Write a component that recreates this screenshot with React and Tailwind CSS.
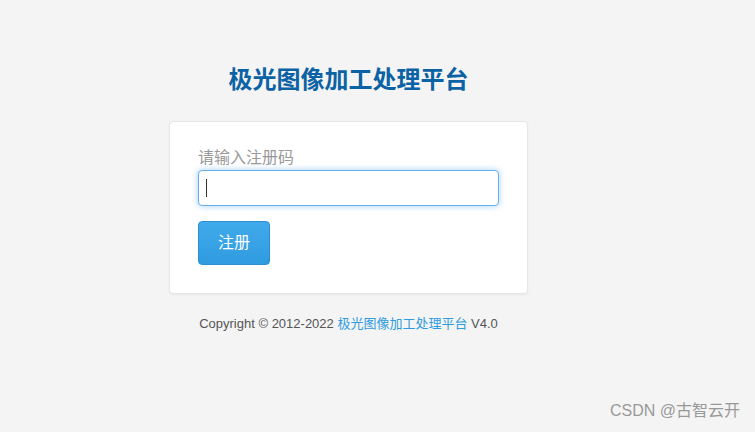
import React from 'react'

const cjk = "font-['Liberation_Sans','Noto_Sans_CJK_SC',sans-serif]"

export default function App() {
  const [code, setCode] = React.useState('')

  return (
    <div className={`min-h-[432px] bg-[#f4f4f4] ${cjk} relative`}>
      <div className="flex flex-col items-center pr-[58px] pt-[62px]">
        <h1 className="text-[24px] leading-[36px] font-bold text-[#0b62a4]">
          极光图像加工处理平台
        </h1>

        <div className="mt-[23px] w-[359px] bg-white border border-[#e6e6e6] rounded-[4px] shadow-[0_1px_2px_rgba(0,0,0,0.05)] px-[28px] pt-[24px] pb-[28px]">
          <label className="block text-[16px] leading-[24px] text-[#999]">请输入注册码</label>
          <div className="relative">
            <input
              value={code}
              onChange={e => setCode(e.target.value)}
              className="w-full h-[36px] rounded-[4px] border border-[#66afe9] bg-white px-[8px] text-[14px] outline-none caret-transparent shadow-[0_0_6px_rgba(102,175,233,0.6)]"
            />
            {code === '' && (
              <span className="absolute left-[8px] top-[9px] w-[1px] h-[18px] bg-[#333]" />
            )}
          </div>
          <button className="mt-[15px] w-[72px] h-[44px] rounded-[4px] border border-[#2a8fd0] bg-gradient-to-b from-[#40aaea] to-[#2f9be0] text-white text-[16px]">
            注册
          </button>
        </div>

        <p className="mt-[20px] text-[13px] leading-[20px] text-[#555]">
          Copyright © 2012-2022 <a className="text-[#2f9be0]">极光图像加工处理平台</a> V4.0
        </p>
      </div>

      <div className="absolute right-[15px] bottom-[9px] text-[16px] text-[#999]">CSDN @古智云开</div>
    </div>
  )
}
